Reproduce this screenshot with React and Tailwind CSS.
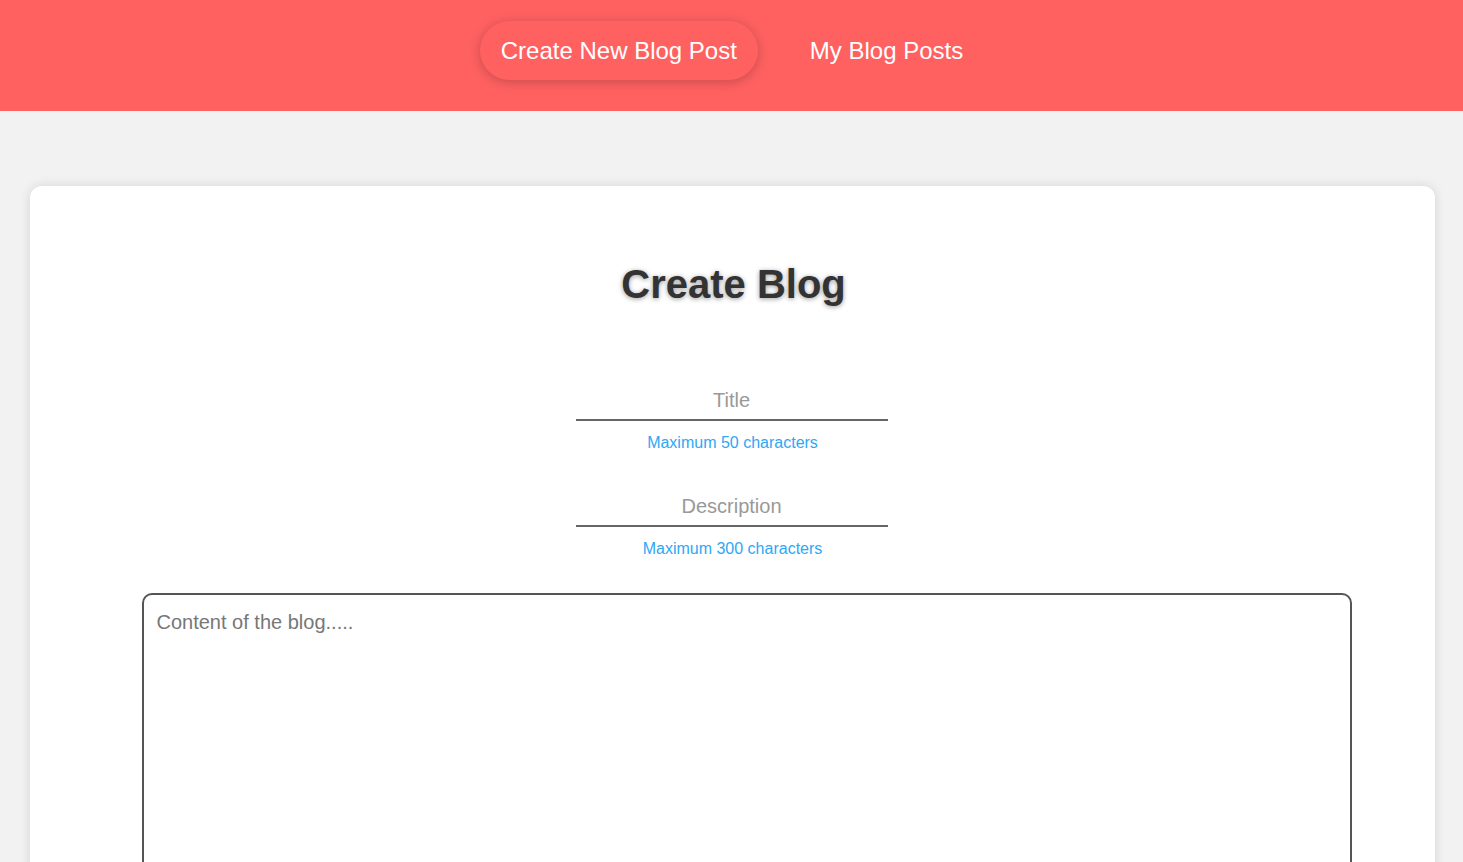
export default function App() {
  return (
    <div className="min-h-screen bg-[#f2f2f2] font-['Liberation_Sans',Arial,sans-serif]">
      {/* --- Top nav --- */}
      <nav className="h-[111px] bg-[#ff6161] flex items-start justify-center gap-[52px] pt-[21px] pr-[20px]">
        <button className="h-[59px] px-[21px] rounded-full bg-[#ff6161] text-white text-[24px] shadow-[0_2px_12px_rgba(0,0,0,0.22)]">
          Create New Blog Post
        </button>
        <button className="h-[59px] text-white text-[24px]">My Blog Posts</button>
      </nav>

      {/* --- Card --- */}
      <div className="ml-[30px] mr-[28px] mt-[75px] bg-white rounded-[12px] shadow-[0_0_12px_rgba(0,0,0,0.12)] pt-[74px] pb-[40px]">
        <h1 className="text-center text-[40px] font-bold text-[#333] [text-shadow:0_1px_5px_rgba(0,0,0,0.4)] leading-[48px] ml-[2px]">
          Create Blog
        </h1>

        <div className="mt-[77px] flex flex-col items-center">
          <input
            placeholder="Title"
            className="w-[312px] -ml-[2px] text-center text-[20px] pb-[4px] border-b-2 border-[#666] outline-none placeholder:text-[#999]"
          />
          <p className="mt-[10px] text-[16px] text-[#2ea7f6]">Maximum 50 characters</p>

          <input
            placeholder="Description"
            className="mt-[36px] w-[312px] -ml-[2px] text-center text-[20px] pb-[4px] border-b-2 border-[#666] outline-none placeholder:text-[#999]"
          />
          <p className="mt-[10px] text-[16px] text-[#2ea7f6]">Maximum 300 characters</p>

          <textarea
            placeholder="Content of the blog....."
            className="mt-[32px] ml-[28px] w-[1210px] h-[400px] border-2 border-[#555] rounded-[10px] px-[13px] py-[12px] text-[20px] outline-none resize-none placeholder:text-[#777]"
          />
        </div>
      </div>
    </div>
  );
}
